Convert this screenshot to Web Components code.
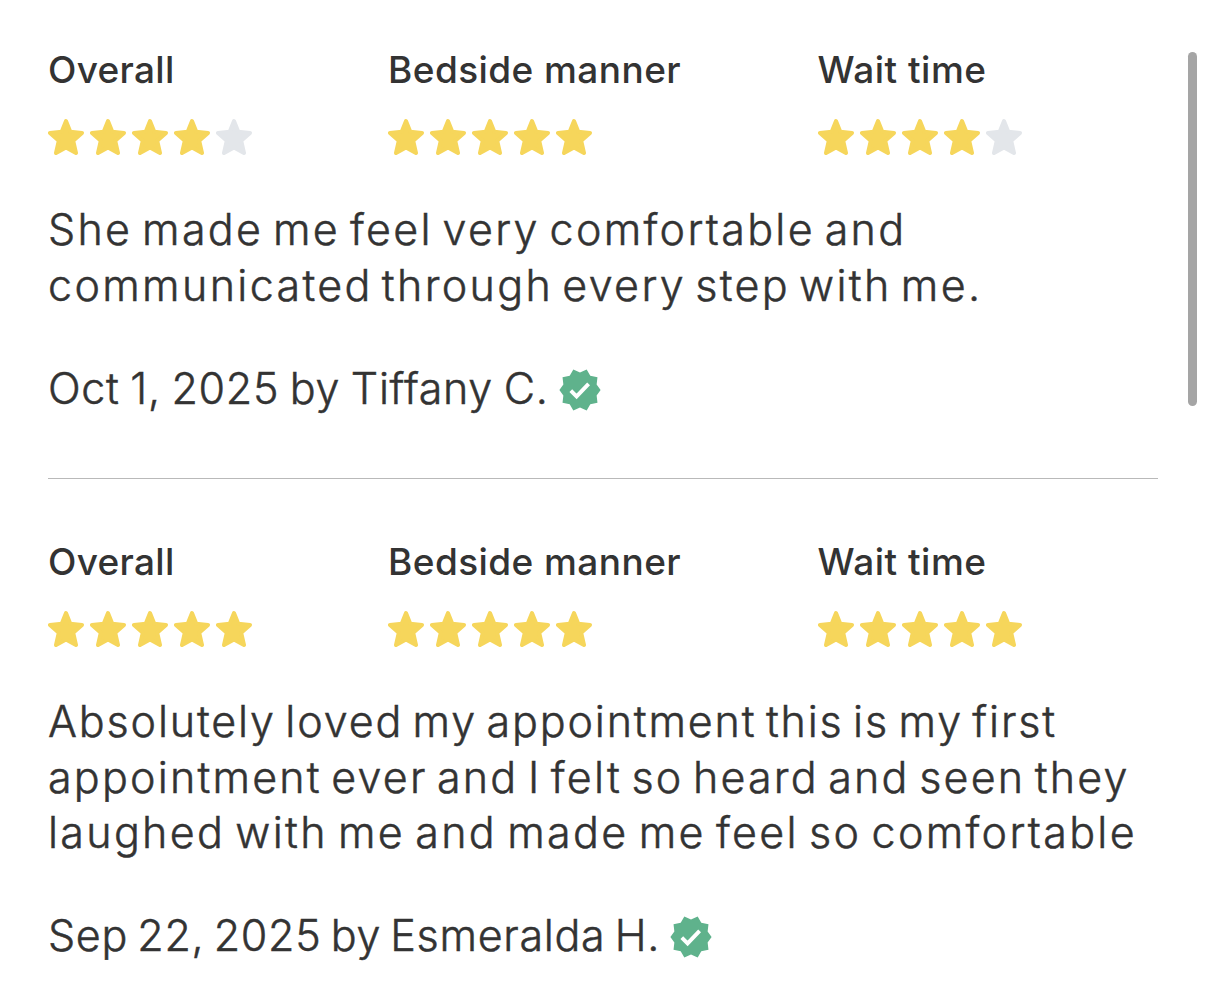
<!DOCTYPE html>
<html lang="en">
<head>
<meta charset="utf-8">
<title>Reviews</title>
<style>
    body{
        margin: 0;
        background: #fff;
        color: #333;
        font-family: Inter, "Liberation Sans", sans-serif;
    }
</style>
</head>
<body>

<review-list>
    <review-card>
        <rating-item slot="ratings" label="Overall" score="4" style="--tracking: 0.3px"></rating-item>
        <rating-item slot="ratings" label="Bedside manner" score="5" style="--tracking: 0.43px"></rating-item>
        <rating-item slot="ratings" label="Wait time" score="4" style="--tracking: 0.5px"></rating-item>
        <text-line style="--tracking: 2.3px; --word-gap: -4.6px">She made me feel very comfortable and</text-line>
        <text-line style="--tracking: 2.35px; --word-gap: -5.4px">communicated through every step with me.</text-line>
        <text-line slot="meta" style="--tracking: 0.7px; --word-gap: -2.1px">Oct 1, 2025 by Tiffany C.</text-line>
    </review-card>
    <review-card>
        <rating-item slot="ratings" label="Overall" score="5" style="--tracking: 0.3px"></rating-item>
        <rating-item slot="ratings" label="Bedside manner" score="5" style="--tracking: 0.43px"></rating-item>
        <rating-item slot="ratings" label="Wait time" score="5" style="--tracking: 0.5px"></rating-item>
        <text-line style="--tracking: 1.85px; --word-gap: -4.5px">Absolutely loved my appointment this is my first</text-line>
        <text-line style="--tracking: 2.2px; --word-gap: -4.85px">appointment ever and I felt so heard and seen they</text-line>
        <text-line style="--tracking: 2.3px; --word-gap: -4.15px">laughed with me and made me feel so comfortable</text-line>
        <text-line slot="meta" style="--tracking: 0.7px; --word-gap: -3.5px">Sep 22, 2025 by Esmeralda H.</text-line>
    </review-card>
</review-list>

<script>
class ReviewList extends HTMLElement{

    constructor(){
        super();
        this.attachShadow({mode: 'open'});
    }

    connectedCallback(){
        this.shadowRoot.innerHTML = `
        <style>
        :host{
            display: flex;
            justify-content: space-between;
            box-sizing: border-box;
            height: 992px;
            padding: 0 9px 0 48px;
            overflow: hidden;
        }

        .reviews{
            width: 1110px;
        }

        .thumb{
            width: 9px;
            height: 354px;
            margin-top: 52px;
            border-radius: 5px;
            background: #a5a5a5;
        }

        ::slotted(review-card:not(:first-child)){
            border-top: 1px solid #b9b9b9;
        }
        </style>

        <div class="reviews"><slot></slot></div>
        <div class="thumb"></div>
        `;
    }
}

class ReviewCard extends HTMLElement{

    constructor(){
        super();
        this.attachShadow({mode: 'open'});
    }

    connectedCallback(){
        this.shadowRoot.innerHTML = `
        <style>
        :host{
            display: block;
            padding: 61px 0 61px;
        }

        :host(:first-child){
            padding-top: 48px;
        }

        .ratings{
            display: flex;
            gap: 136.5px;
        }

        .ratings ::slotted(:first-child){
            margin-right: -0.5px;
        }

        .text{
            margin: 47.4px 0 47.2px;
        }

        .meta{
            display: flex;
            align-items: center;
            gap: 10px;
        }

        verified-badge{
            margin-top: 1.4px;
        }
        </style>

        <div class="ratings"><slot name="ratings"></slot></div>
        <div class="text"><slot></slot></div>
        <div class="meta"><slot name="meta"></slot><verified-badge></verified-badge></div>
        `;
    }
}

// one line of review text, spacing comes from --tracking and --word-gap
class TextLine extends HTMLElement{

    constructor(){
        super();
        this.attachShadow({mode: 'open'});
    }

    connectedCallback(){
        this.shadowRoot.innerHTML = `
        <style>
        :host{
            display: block;
            font-size: 43px;
            font-weight: 300;
            line-height: 55.7px;
            letter-spacing: var(--tracking, 0);
            word-spacing: var(--word-gap, 0);
            white-space: nowrap;
            -webkit-text-stroke: 0.5px currentColor;
        }
        </style>
        <slot></slot>
        `;
    }
}

class RatingItem extends HTMLElement{

    constructor(){
        super();
        this.attachShadow({mode: 'open'});
    }

    connectedCallback(){
        const score = parseInt(this.getAttribute('score'));

        let stars = '';
        for (let i = 0; i < 5; i++) {
            stars += this.star(i < score ? '#f6d65b' : '#e3e6ea');
        }

        this.shadowRoot.innerHTML = `
        <style>
        :host{
            display: block;
            min-width: 204px;
        }

        .label{
            font-size: 37px;
            font-weight: 500;
            line-height: 44px;
            letter-spacing: var(--tracking, 0);
            white-space: nowrap;
        }

        .stars{
            display: flex;
            gap: 6px;
            margin-top: 26px;
        }

        svg{
            display: block;
            width: 36px;
            height: 37px;
        }
        </style>

        <div class="label">${this.getAttribute('label')}</div>
        <div class="stars">${stars}</div>
        `;
    }

    star(color){
        return `<svg viewBox="0 0 36 37">
            <path fill="${color}" stroke="${color}" stroke-width="4" stroke-linejoin="round"
                d="M18 3 L22.3 13.8 L34 14.9 L25.2 22.8 L28 35 L18 29.4 L8 35 L10.8 22.8 L2 14.9 L13.7 13.8 Z"/>
        </svg>`;
    }
}

// ten pointed green seal with a check mark
class VerifiedBadge extends HTMLElement{

    constructor(){
        super();
        this.attachShadow({mode: 'open'});
    }

    connectedCallback(){
        this.shadowRoot.innerHTML = `
        <style>
        :host{
            display: block;
            width: 42px;
            height: 42px;
        }

        svg{
            display: block;
            overflow: visible;
        }
        </style>

        <svg width="42" height="42" viewBox="0 0 42 42">
            <polygon fill="#5fb28c" points="${this.sealPoints()}"/>
            <path d="M11.8 21.6 L17.6 27.4 L29.6 14.8" fill="none" stroke="#fff" stroke-width="3.9"/>
        </svg>
        `;
    }

    sealPoints(){
        const points = [];
        for (let i = 0; i < 20; i++) {
            const r = i % 2 ? 17.5 : (i % 10 ? 21.6 : 20.6);
            const a = i * Math.PI / 10;
            points.push((21 + r * Math.cos(a)).toFixed(2) + ',' + (21 + r * Math.sin(a)).toFixed(2));
        }
        return points.join(' ');
    }
}

customElements.define('review-list', ReviewList);
customElements.define('review-card', ReviewCard);
customElements.define('text-line', TextLine);
customElements.define('rating-item', RatingItem);
customElements.define('verified-badge', VerifiedBadge);
</script>
</body>
</html>
